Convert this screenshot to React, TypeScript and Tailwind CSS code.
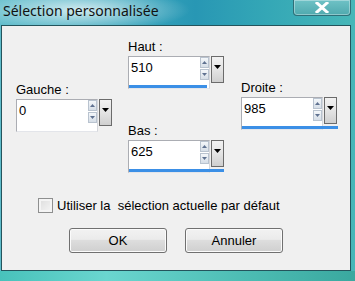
import React from "react";

const font = { fontFamily: '"Liberation Sans", Arial, sans-serif' };

function SpinArrow({ up }: { up?: boolean }) {
  return (
    <div className="w-[9px] h-[11px] border border-[#b9c3cf] bg-gradient-to-b from-[#f4f7fa] to-[#d6dee7] flex items-center justify-center">
      <svg width="5" height="3" viewBox="0 0 5 3">
        {up ? (
          <polygon points="0,3 5,3 2.5,0" fill="#5f7190" />
        ) : (
          <polygon points="0,0 5,0 2.5,3" fill="#5f7190" />
        )}
      </svg>
    </div>
  );
}

function NumField({ value, bar }: { value: string; bar: number }) {
  return (
    <div className="flex flex-col">
      <div className="flex items-start">
        <div className="w-[82px] h-[33px] bg-white border border-[#abadb3] border-r-[#d5d7dc] border-b-[#e3e5ea] flex justify-between">
          <span className="pl-[2px] pt-[3px] text-[13px] leading-[15px] text-black">
            {value}
          </span>
          <div className="flex flex-col pt-[0px] pr-[0px] gap-px">
            <SpinArrow up />
            <SpinArrow />
          </div>
        </div>
        <div className="ml-px w-[13px] h-[27px] border border-[#6b6b6b] bg-gradient-to-b from-[#f2f2f2] via-[#e4e4e4] to-[#cfcfcf] flex justify-center pt-[8px]">
          <svg width="7" height="4" viewBox="0 0 7 4">
            <polygon points="0,0 7,0 3.5,4" fill="#000" />
          </svg>
        </div>
      </div>
      {bar > 0 ? (
        <div
          className="-mt-[4px] ml-px h-[3px] bg-[#3b8fe6]"
          style={{ width: bar }}
        />
      ) : null}
    </div>
  );
}

function Label({ children }: { children: React.ReactNode }) {
  return (
    <div className="text-[13px] leading-[15px] text-black mb-[2px] whitespace-pre">
      {children}
    </div>
  );
}

function Button({ children }: { children: React.ReactNode }) {
  return (
    <div className="w-[98px] h-[25px] rounded-[3px] border border-[#707070] bg-[linear-gradient(to_bottom,#f2f2f2_0%,#ebebeb_45%,#dddddd_50%,#cfcfcf_100%)] shadow-[inset_0_0_0_1px_#fbfbfb] flex items-center justify-center text-[13px] text-black">
      {children}
    </div>
  );
}

export default function App() {
  return (
    <div
      className="w-[355px] h-[281px] overflow-hidden flex flex-col bg-[linear-gradient(to_right,#5fbccb_0%,#3aa6bd_35%,#2897b4_55%,#34a7b6_75%,#47b7b8_100%)]"
      style={font}
    >
      {/* title bar */}
      <div className="h-[25px] flex justify-between items-start bg-[radial-gradient(ellipse_110px_22px_at_80px_10px,rgba(255,255,255,0.75),rgba(255,255,255,0)_100%)]">
        <div
          className="pl-[3px] pt-[2px] text-[14.5px] leading-[18px] text-[#111]"
          style={{ fontFamily: '"Noto Sans", "Liberation Sans", sans-serif', fontSize: 14 }}
        >
          Sélection personnalisée
        </div>
        <div className="mr-[4px] w-[58px] h-[16px] rounded-b-[4px] border border-t-0 border-[#2f6f78] bg-gradient-to-b from-[#6fc2c6] to-[#4fa9ae] shadow-[inset_0_0_0_1px_rgba(255,255,255,0.35)] flex items-center justify-center">
          <svg width="14" height="11" viewBox="0 0 14 11">
            <path
              d="M2 1 L12 10 M12 1 L2 10"
              stroke="#fff"
              strokeWidth="3"
              strokeLinecap="square"
            />
          </svg>
        </div>
      </div>

      {/* client area */}
      <div className="ml-px mr-[4px] h-[246px] border border-[#24545c] bg-[#f0f0f0] shadow-[0_1px_0_#b8e8e4] flex flex-col">
        <div className="h-[151px] flex items-start">
          <div className="ml-[14px] mt-[56px]">
            <Label>Gauche :</Label>
            <NumField value="0" bar={0} />
          </div>
          <div className="ml-[16px] mt-[13px]">
            <Label>Haut :</Label>
            <NumField value="510" bar={78} />
            <div className="mt-[35px]">
              <Label>Bas :</Label>
              <NumField value="625" bar={95} />
            </div>
          </div>
          <div className="ml-[17px] mt-[54px]">
            <Label>Droite :</Label>
            <NumField value="985" bar={96} />
          </div>
        </div>

        <div className="mt-[21px] ml-[36px] h-[15px] flex items-center">
          <div className="w-[15px] h-[15px] border border-[#8e8f8f] bg-gradient-to-br from-[#dcdcdc] to-[#f6f6f6] shadow-[inset_0_0_0_2px_#f4f4f4]" />
          <span className="ml-[4px] text-[13px] leading-[15px] text-black whitespace-pre">
            Utiliser la  sélection actuelle par défaut
          </span>
        </div>

        <div className="mt-[15px] ml-[67px] flex gap-[18px]">
          <Button>OK</Button>
          <Button>Annuler</Button>
        </div>
      </div>

      <div className="flex-1 bg-[linear-gradient(to_right,#48c2bb,#6ad6cf_30%,#4cbcb3_70%,#3aa89f)]" />
    </div>
  );
}
